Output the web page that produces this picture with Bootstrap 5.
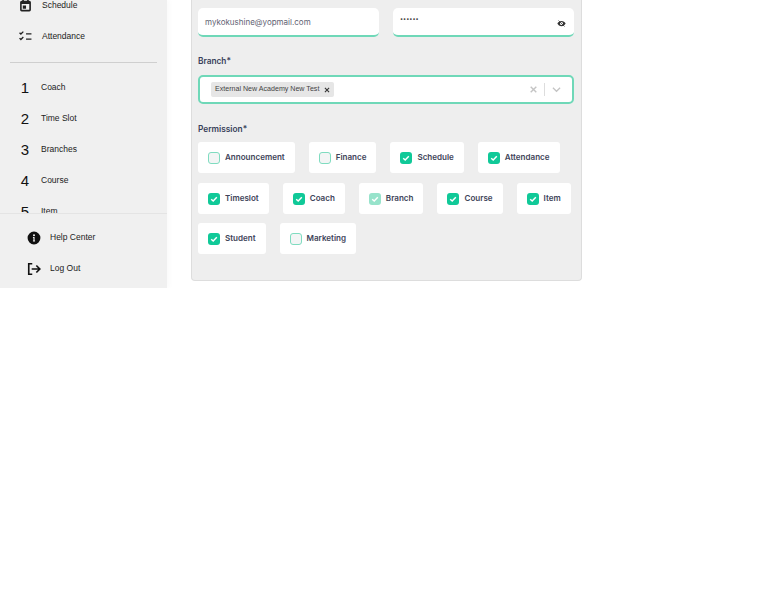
<!DOCTYPE html>
<html lang="en"><head><meta charset="utf-8"><title>Edit</title>
<link href="https://cdn.jsdelivr.net/npm/bootstrap@5.3.0/dist/css/bootstrap.min.css" rel="stylesheet">
<style>
html,body{background:#fff;margin:0}
.shell{height:288px;overflow:hidden;font-family:Inter,"Liberation Sans",sans-serif}
.side{width:167px;height:288px;background:#f0f0f0;flex:none;box-shadow:3px 0 5px rgba(0,0,0,.02);font-family:"Liberation Sans",sans-serif;font-size:8.5px;color:#222}
.side-scroll{height:213px;overflow:hidden;flex:none}
.side-inner{margin-top:-10px}
.side-item{height:31px;padding-left:19px;gap:10px}
.side-item .num{width:12px;font-size:15px;line-height:1;text-align:center;color:#111}
.side-item svg{width:13px;height:13px;flex:none}
.side-rule{height:1px;background:#cfcfcf;margin:10px 10px 9px}
.side-foot{border-top:1px solid #e4e4e4;height:75px;padding-top:8px}
.foot-item{height:31px;padding-left:27px;gap:9px}
.foot-item svg{width:14px;height:14px;flex:none}
.main-area{padding-left:24px;flex:none;width:414px}
.panel{width:391px;height:281px;background:#eee;border:1px solid #ddd;border-top:0;border-radius:0 0 4px 4px;padding:8px 7px 0 6px}
.field{height:29px;width:181px;background:#fff;border-radius:5px;border-bottom:2px solid #6fd8b8;padding:0 7px;font-size:8px;color:#5f6373}
.dots{font-size:5.5px;line-height:1;margin-top:-3px;color:#444}
.eye{margin-right:1.5px;margin-top:4px}
.lbl{font-size:8.3px;font-weight:600;color:#38405a;line-height:12px}
.lbl-a{margin-top:18px;margin-bottom:8px}
.lbl-b{margin-top:19px;margin-bottom:7px}
.sel{height:29px;width:376px;background:#fff;border:2px solid #6fd8b8;border-radius:5px;padding:0 11px 0 11px}
.chip{background:#e6e6e6;border-radius:2px;height:15px;padding:0 4px;font-family:"Liberation Sans",sans-serif;font-size:7.1px;color:#444;gap:5px}
.sel-tools{gap:7px}
.divv{width:1px;height:13px;background:#ddd}
.perm-row{gap:14px;margin-bottom:10px}
.perm-row+.perm-row{margin-bottom:9px}
.perm{height:31px;background:#fff;border-radius:3px;padding:0 10px;gap:5px;font-size:8.05px;font-weight:600;color:#3e4459}
.box{width:12px;height:12px;border-radius:3px;flex:none;display:flex;align-items:center;justify-content:center}
.box.on{background:#10c998}
.box.dim{background:#97e3cb}
.box.off{background:#f3f5f5;border:1px solid #7fdcc0}
.box svg{width:8px;height:8px}
</style></head><body>
<div class="shell d-flex">
<aside class="side d-flex flex-column">
<div class="side-scroll"><div class="side-inner">
<div class="side-item d-flex align-items-center"><svg viewBox="0 0 24 24"><path fill="#222" d="M19 3h-1V0h-3v3H9V0H6v3H5a3 3 0 0 0-3 3v14a3 3 0 0 0 3 3h14a3 3 0 0 0 3-3V6a3 3 0 0 0-3-3zm0 17H5V9h14zm-6-8H7v6h6z"/></svg><span>Schedule</span></div>
<div class="side-item d-flex align-items-center"><svg viewBox="0 0 24 24"><path fill="none" stroke="#222" stroke-width="2.4" d="M1 5l2.500 2.500L8 3M1 15l2.500 2.500L8 13M13 7h10M13 17h10"/></svg><span>Attendance</span></div>
<div class="side-rule"></div>
<div class="side-item d-flex align-items-center"><span class="num">1</span><span>Coach</span></div>
<div class="side-item d-flex align-items-center"><span class="num">2</span><span>Time Slot</span></div>
<div class="side-item d-flex align-items-center"><span class="num">3</span><span>Branches</span></div>
<div class="side-item d-flex align-items-center"><span class="num">4</span><span>Course</span></div>
<div class="side-item d-flex align-items-center"><span class="num">5</span><span>Item</span></div>
</div></div>
<div class="side-foot">
<div class="foot-item d-flex align-items-center"><svg viewBox="0 0 24 24"><path fill="#111" d="M12 1a11 11 0 1 0 0 22 11 11 0 0 0 0-22zm1.800 17h-3.600v-1.800h.8v-4h-.8v-1.800h2.800v5.800h.8zM12 9.200a1.800 1.800 0 1 1 0-3.600 1.800 1.800 0 0 1 0 3.600z"/></svg><span>Help Center</span></div>
<div class="foot-item d-flex align-items-center"><svg viewBox="0 0 24 24"><path fill="none" stroke="#111" stroke-width="2.8" d="M9 3H3v18h6M8 12h14M16 6l6 6-6 6"/></svg><span>Log Out</span></div>
</div>
</aside>
<main class="main-area">
<div class="panel">
<div class="d-flex justify-content-between">
<div class="field d-flex align-items-center">mykokushine@yopmail.com</div>
<div class="field d-flex align-items-center justify-content-between"><span class="dots">••••••</span>
<svg width="9" height="9" viewBox="0 0 24 24" class="eye"><path fill="#333" d="M12 5C7 5 3 8 1 12c2 4 6 7 11 7s9-3 11-7c-2-4-6-7-11-7zm0 11a4 4 0 1 1 0-8 4 4 0 0 1 0 8z"/><path stroke="#333" stroke-width="2" d="M4 4l16 16"/></svg></div>
</div>
<div class="lbl lbl-a">Branch*</div>
<div class="sel d-flex align-items-center justify-content-between">
<div class="chip d-flex align-items-center"><span>External New Academy New Test</span><svg width="6" height="6" viewBox="0 0 10 10"><path stroke="#333" stroke-width="1.800" d="M1.500 1.500l7 7M8.500 1.500l-7 7"/></svg></div>
<div class="d-flex align-items-center sel-tools"><svg width="7" height="7" viewBox="0 0 10 10"><path stroke="#c4c4c4" stroke-width="2" d="M1 1l8 8M9 1l-8 8"/></svg><span class="divv"></span><svg width="9" height="9" viewBox="0 0 10 10"><path fill="none" stroke="#c4c4c4" stroke-width="1.400" d="M1 3l4 4 4-4"/></svg></div>
</div>
<div class="lbl lbl-b">Permission*</div>
<div class="d-flex perm-row">
<div class="perm d-flex align-items-center"><span class="box off"></span>Announcement</div>
<div class="perm d-flex align-items-center"><span class="box off"></span>Finance</div>
<div class="perm d-flex align-items-center"><span class="box on"><svg viewBox="0 0 10 10"><path fill="none" stroke="#fff" stroke-width="1.800" d="M1.500 5.200l2.500 2.300 4.500-4.800"/></svg></span>Schedule</div>
<div class="perm d-flex align-items-center"><span class="box on"><svg viewBox="0 0 10 10"><path fill="none" stroke="#fff" stroke-width="1.800" d="M1.500 5.200l2.500 2.300 4.500-4.800"/></svg></span>Attendance</div>
</div>
<div class="d-flex perm-row">
<div class="perm d-flex align-items-center"><span class="box on"><svg viewBox="0 0 10 10"><path fill="none" stroke="#fff" stroke-width="1.800" d="M1.500 5.200l2.500 2.300 4.500-4.800"/></svg></span>Timeslot</div>
<div class="perm d-flex align-items-center"><span class="box on"><svg viewBox="0 0 10 10"><path fill="none" stroke="#fff" stroke-width="1.800" d="M1.500 5.200l2.500 2.300 4.500-4.800"/></svg></span>Coach</div>
<div class="perm d-flex align-items-center"><span class="box dim"><svg viewBox="0 0 10 10"><path fill="none" stroke="#fff" stroke-width="1.800" d="M1.500 5.200l2.500 2.300 4.500-4.800"/></svg></span>Branch</div>
<div class="perm d-flex align-items-center"><span class="box on"><svg viewBox="0 0 10 10"><path fill="none" stroke="#fff" stroke-width="1.800" d="M1.500 5.200l2.500 2.300 4.500-4.800"/></svg></span>Course</div>
<div class="perm d-flex align-items-center"><span class="box on"><svg viewBox="0 0 10 10"><path fill="none" stroke="#fff" stroke-width="1.800" d="M1.500 5.200l2.500 2.300 4.500-4.800"/></svg></span>Item</div>
</div>
<div class="d-flex perm-row">
<div class="perm d-flex align-items-center"><span class="box on"><svg viewBox="0 0 10 10"><path fill="none" stroke="#fff" stroke-width="1.800" d="M1.500 5.200l2.500 2.300 4.500-4.800"/></svg></span>Student</div>
<div class="perm d-flex align-items-center"><span class="box off"></span>Marketing</div>
</div>
</div>
</main>
</div>
<script src="https://cdn.jsdelivr.net/npm/bootstrap@5.3.0/dist/js/bootstrap.bundle.min.js"></script>
</body></html>
